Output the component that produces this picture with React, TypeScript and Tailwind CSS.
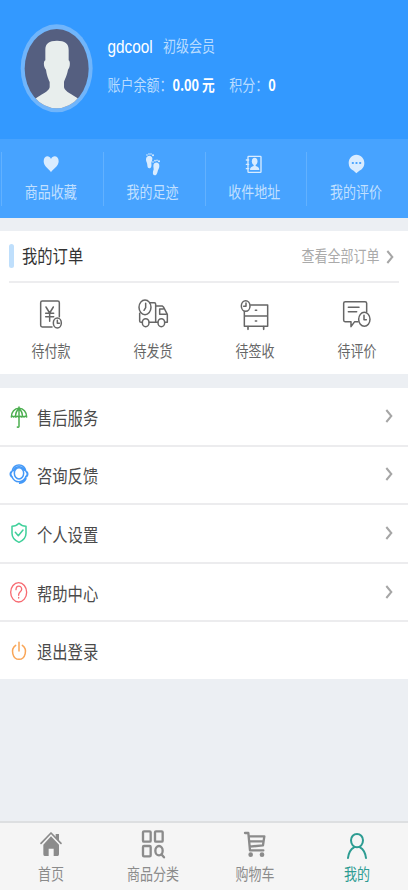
import React from "react";

type IconProps = { children: React.ReactNode; className: string; box: string };

const Icon = ({ children, className, box }: IconProps) => (
  <svg
    viewBox={box}
    className={`shrink-0 ${className}`}
    fill="none"
    stroke="currentColor"
    strokeLinecap="round"
    strokeLinejoin="round"
  >
    {children}
  </svg>
);

// tall narrow lettering used all over the page
const Label = ({ children, className = "" }: { children: React.ReactNode; className?: string }) => (
  <span className={`block origin-center scale-y-[1.22] whitespace-nowrap ${className}`}>{children}</span>
);

const Chevron = () => (
  <Icon box="0 0 24 48" className="h-4 w-2 text-[#a6a6a6]">
    <path d="M4 6 L19 24 L4 42" strokeWidth="6" strokeLinecap="butt" strokeLinejoin="miter" />
  </Icon>
);

const shortcuts = [
  {
    name: "商品收藏",
    icon: (
      <path
        d="M36 61C31 52 14 43 14 28C14 10 31 8 36 21C41 8 59 10 59 28C59 43 41 52 36 61Z"
        fill="currentColor"
        stroke="none"
      />
    ),
  },
  {
    name: "我的足迹",
    icon: (
      <g fill="currentColor" stroke="none">
        <path d="M15 22C15 12 26 9 32 14C37 19 32 27 31 33C32 40 32 49 25 49C18 49 20 40 18 34C17 30 15 27 15 22Z" />
        <circle cx="18" cy="9" r="2.5" />
        <circle cx="24" cy="6" r="2.5" />
        <circle cx="30" cy="6" r="2.5" />
        <circle cx="36" cy="10" r="3" />
        <path d="M55 42C56 32 46 29 40 34C35 39 38 46 38 52C36 59 33 69 41 70C48 71 49 62 51 55C53 50 55 47 55 42Z" />
        <circle cx="36" cy="30" r="2.5" />
        <circle cx="42" cy="26" r="2.5" />
        <circle cx="48" cy="25" r="2.5" />
        <circle cx="54" cy="28" r="3" />
      </g>
    ),
  },
  {
    name: "收件地址",
    icon: (
      <g strokeWidth="4">
        <rect x="18" y="13" width="39" height="48" rx="2" />
        <path d="M13 24H20M13 37H20M13 50H20" />
        <ellipse cx="38" cy="28" rx="8.5" ry="11" fill="currentColor" stroke="none" />
        <path d="M35 36H41V42C47 44 52 46 52 54H24C24 46 29 44 35 42Z" fill="currentColor" stroke="none" />
      </g>
    ),
  },
  {
    name: "我的评价",
    icon: (
      <>
        <path
          d="M37 8C51 8 61 19 61 33C61 46 53 53 46 56L37 64L29 56C20 53 14 45 14 33C14 19 24 8 37 8Z"
          fill="currentColor"
          stroke="none"
        />
        <path d="M26 33H27M37 33H38M48 33H49" stroke="#47a3ff" strokeWidth="6" />
      </>
    ),
  },
];

const orders = [
  {
    name: "待付款",
    icon: (
      <>
        <path d="M79 62V20Q79 15 74 15H28Q23 15 23 20V88Q23 93 28 93H57" />
        <path d="M39 33L50 51L61 33M50 51V76M38 52H62M38 62H62" />
        <ellipse cx="73" cy="81" rx="12" ry="15" />
        <path d="M73 73V82H79" />
      </>
    ),
  },
  {
    name: "待发货",
    icon: (
      <>
        <ellipse cx="30" cy="34" rx="18" ry="22" />
        <path d="M32 22V35L27 43" />
        <path d="M44 20H58Q62 20 62 25V79H43M14 52V75Q14 79 18 79H22M62 30H82L86 34L97 55V79H90M62 79H68M93 55H74V39H85" />
        <ellipse cx="32" cy="80" rx="10" ry="12" />
        <ellipse cx="79" cy="80" rx="10" ry="12" />
      </>
    ),
  },
  {
    name: "待签收",
    icon: (
      <>
        <path d="M41 27H92V91H22V47M22 60H92M55 43H59M55 75H59" />
        <path d="M33 92V100M80 92V100" strokeWidth="5" />
        <ellipse cx="26" cy="30" rx="13" ry="16" />
        <path d="M27 21V31H20" />
      </>
    ),
  },
  {
    name: "待评价",
    icon: (
      <>
        <path d="M57 77H47L36 92V77H18Q14 77 14 72V22Q14 17 19 17H78Q83 17 83 22V47M28 34H60M28 47H53" />
        <ellipse cx="76" cy="70" rx="17" ry="21" />
        <path d="M75 58V71H82" />
      </>
    ),
  },
];

const menu = [
  {
    name: "售后服务",
    color: "text-[#4caf50]",
    arrow: true,
    icon: (
      <>
        <path d="M7 36C7 20 17 10 30 10C43 10 53 20 53 36Q49 31 45 36Q41 31 37 36Q33 31 29 36Q25 31 21 36Q17 31 14 36Q10 32 7 36Z" />
        <path d="M30 6V64Q30 68 25 66M30 10Q19 20 20 35M30 10Q41 20 40 35" />
      </>
    ),
  },
  {
    name: "咨询反馈",
    color: "text-[#4499f8]",
    arrow: true,
    icon: (
      <>
        <ellipse cx="30" cy="28" rx="14" ry="17" />
        <path d="M9 22C12 8 20 3 30 3C40 3 48 9 51 22M9 38C13 49 20 53 30 53C42 53 48 46 51 37M32 58C41 57 48 51 51 44M14 20C18 10 23 8 30 8C37 8 42 11 46 19" />
        <path d="M7 24Q2 29 7 37M53 24Q58 29 53 37" strokeWidth="6" />
      </>
    ),
  },
  {
    name: "个人设置",
    color: "text-[#3fd09a]",
    arrow: true,
    icon: (
      <>
        <path d="M30 4C24 10 16 13 9 13V34C9 49 20 57 30 61C40 57 51 49 51 34V13C44 13 36 10 30 4Z" />
        <path d="M19 31L28 41L42 24" />
      </>
    ),
  },
  {
    name: "帮助中心",
    color: "text-[#f76b72]",
    arrow: true,
    icon: (
      <g strokeWidth="4">
        <ellipse cx="29" cy="34" rx="24" ry="29" />
        <path d="M21 26C21 12 38 12 38 25C38 32 29 33 29 41V43M29 49V51" />
      </g>
    ),
  },
  {
    name: "退出登录",
    color: "text-[#f9a658]",
    arrow: false,
    icon: <path d="M30 7V33M20 16C3 28 11 58 30 58C49 58 57 28 40 16" />,
  },
];

const tabs = [
  {
    name: "首页",
    color: "text-[#8b8b8b]",
    icon: (
      <>
        <path d="M15 46L45 15L75 46" strokeWidth="5" />
        <path d="M59 18H69V38L59 29Z" fill="currentColor" stroke="none" />
        <path
          d="M45 25L69 50V79Q69 84 65 84H53V62H38V84H26Q22 84 22 79V50Z"
          fill="currentColor"
          stroke="none"
        />
      </>
    ),
  },
  {
    name: "商品分类",
    color: "text-[#8b8b8b]",
    icon: (
      <g strokeWidth="7">
        <rect x="15" y="10" width="23" height="31" rx="3" />
        <rect x="51" y="10" width="23" height="31" rx="3" />
        <rect x="15" y="54" width="23" height="31" rx="3" />
        <ellipse cx="63" cy="68" rx="11" ry="14" />
        <path d="M70 79L78 88" />
      </g>
    ),
  },
  {
    name: "购物车",
    color: "text-[#8b8b8b]",
    icon: (
      <>
        <path d="M15 15H25L30 67H70M27 25H73L69 52L29 56M28 40H70" strokeWidth="7" />
        <circle cx="32" cy="80" r="7" fill="currentColor" stroke="none" />
        <circle cx="66" cy="80" r="7" fill="currentColor" stroke="none" />
      </>
    ),
  },
  {
    name: "我的",
    color: "text-[#2d9c92]",
    icon: (
      <path
        d="M45 58C35 58 27 49 27 37C27 26 35 18 45 18C55 18 63 26 63 37C63 49 55 58 45 58ZM18 90C20 74 27 63 36 58M72 90C70 74 63 63 54 58"
        strokeWidth="6"
      />
    ),
  },
];

const App = () => {
  return (
    <main className="flex h-[890px] w-[408px] flex-col overflow-hidden bg-[#eceff3] font-['Liberation_Sans','Noto_Sans_CJK_SC',sans-serif] text-[13px] leading-5">
      {/* Profile */}
      <header className="flex h-[139px] shrink-0 bg-[#3399ff] pl-5 pt-[23px]">
        <svg viewBox="60 69 222 270" className="h-[90px] w-[74px] shrink-0">
          <defs>
            <clipPath id="face">
              <ellipse cx="170" cy="206" rx="96" ry="119" />
            </clipPath>
          </defs>
          <ellipse cx="170" cy="205" rx="108" ry="132" fill="#70b5fb" />
          <ellipse cx="170" cy="206" rx="96" ry="119" fill="#555f80" />
          <path
            d="M136 150C136 130 147 122 171 122C195 122 206 130 206 150V181C212 184 210 203 204 209C200 230 194 237 192 246V262C195 276 216 282 236 297V340H105V297C124 282 146 276 149 262V246C146 237 141 230 138 209C131 203 129 184 136 181Z"
            fill="#e8eeed"
            clipPath="url(#face)"
          />
        </svg>
        <div className="ml-[13.5px] pt-[13px]">
          <div className="flex items-center">
            <Label className="text-[15.3px] text-white">gdcool</Label>
            <Label className="ml-[10.5px] mt-px text-[#b9dcff]">初级会员</Label>
          </div>
          <div className="mt-[18px] flex items-center font-['Noto_Sans_CJK_SC',sans-serif] text-[#b9dcff]">
            <Label>账户余额：</Label>
            <Label className="text-[12.7px] font-bold text-white">0.00 元</Label>
            <Label className="ml-[14.5px]">积分：</Label>
            <Label className="text-[12.7px] font-bold text-white">0</Label>
          </div>
        </div>
      </header>

      <nav className="grid h-[78.5px] shrink-0 grid-cols-4 bg-[#47a3ff] pl-px pt-[13px] text-[#c2e0ff]">
        {shortcuts.map((item) => (
          <div key={item.name} className="flex h-[54px] flex-col items-center border-l border-[#62b1ff] pr-[3px]">
            <Icon box="0 0 72 72" className="size-6 text-[#d9ecff]">
              {item.icon}
            </Icon>
            <Label className="mt-[7px]">{item.name}</Label>
          </div>
        ))}
      </nav>

      {/* Orders */}
      <section className="mt-[13.5px] h-[142.5px] shrink-0 bg-white">
        <div className="mx-[9px] flex h-[52px] items-center border-b-2 border-[#ededef]">
          <i className="h-6 w-[4.5px] rounded-sm bg-[#bfdffc]" />
          <Label className="ml-[8.5px] mt-[2px] text-[15.3px] text-[#333333]">我的订单</Label>
          <Label className="ml-auto mr-[6px] mt-[2px] text-[#aaaaaa]">查看全部订单</Label>
          <div className="mr-[5.5px] mt-px">
            <Chevron />
          </div>
        </div>
        <div className="grid grid-cols-4 pt-[12.5px]">
          {orders.map((item) => (
            <div key={item.name} className="flex flex-col items-center text-[#666666]">
              <Icon box="0 0 108 108" className="size-9 stroke-[4.5]">
                {item.icon}
              </Icon>
              <Label className="mt-[10.5px]">{item.name}</Label>
            </div>
          ))}
        </div>
      </section>

      {/* Menu */}
      <ul className="mt-[14.5px] shrink-0">
        {menu.map((item) => (
          <li
            key={item.name}
            className="flex h-[58.6px] items-center border-b-[2.5px] border-[#ececee] bg-white pl-[9px] pr-[15px] pt-[2px] last:h-[57px] last:border-0"
          >
            <Icon box="0 0 60 72" className={`h-6 w-5 stroke-[4.5] ${item.color}`}>
              {item.icon}
            </Icon>
            <Label className="ml-2 mt-[3px] text-[15.3px] text-[#4a4a4a]">{item.name}</Label>
            {item.arrow && (
              <div className="mb-[3px] ml-auto">
                <Chevron />
              </div>
            )}
          </li>
        ))}
      </ul>

      <footer className="mt-auto grid h-[69px] shrink-0 grid-cols-4 border-t-2 border-[#dddfe1] bg-[#f5f5f5] pt-[5px]">
        {tabs.map((item) => (
          <div key={item.name} className={`flex flex-col items-center ${item.color}`}>
            <Icon box="0 0 90 96" className="h-8 w-[30px]">
              {item.icon}
            </Icon>
            <Label className="mt-[5px]">{item.name}</Label>
          </div>
        ))}
      </footer>
    </main>
  );
};

export default App;
